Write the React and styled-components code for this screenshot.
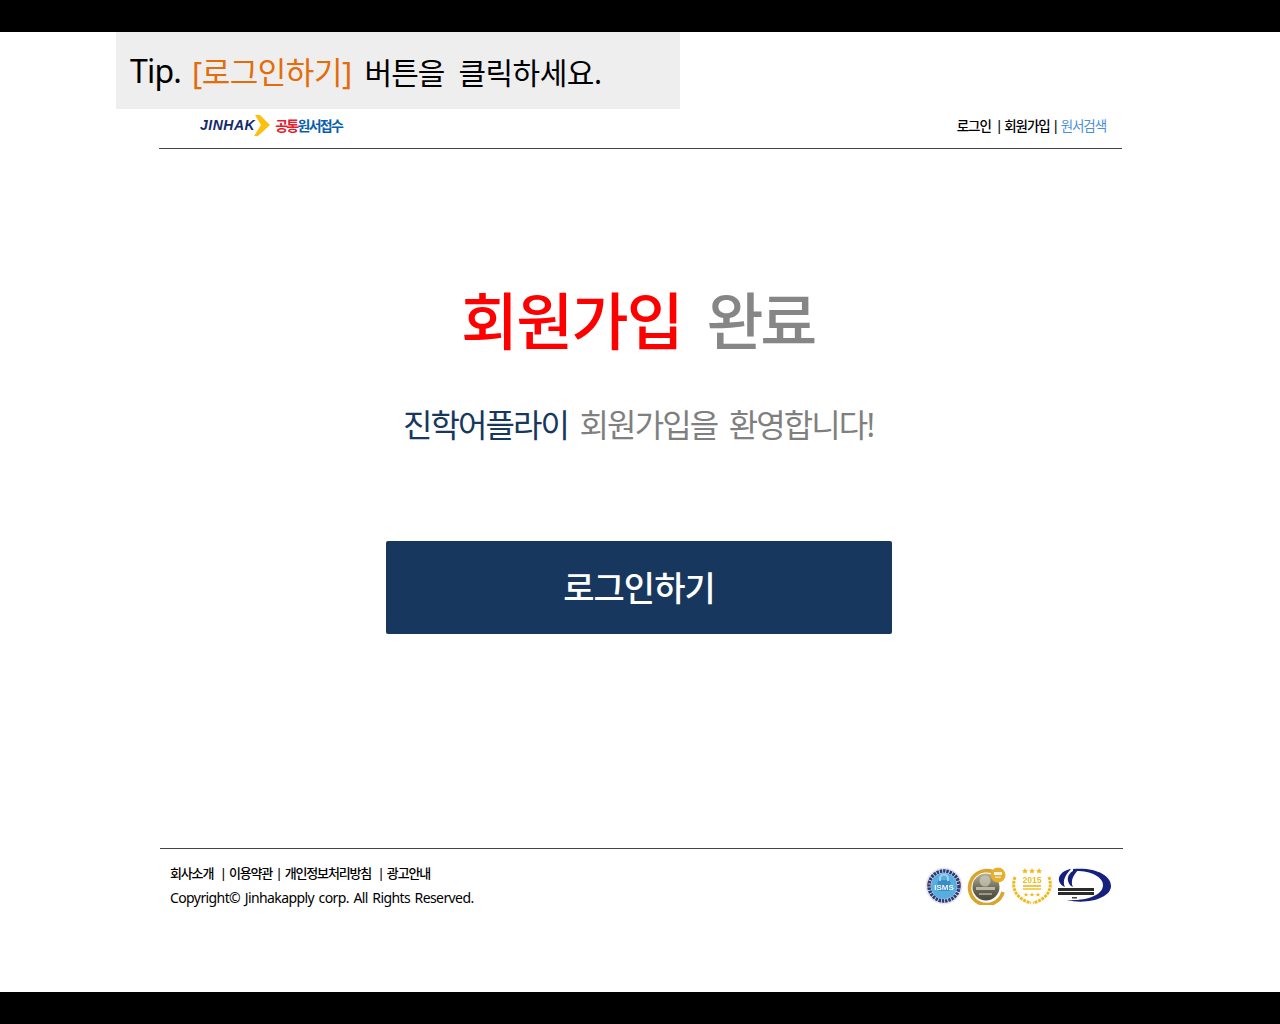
import React from "react";
import styled, { createGlobalStyle } from "styled-components";

const Global = createGlobalStyle`
  html, body { margin: 0; padding: 0; background: #fff; }
  body { font-family: "Noto Sans", "Noto Sans CJK KR", sans-serif; color: #000; }
`;
const Page = styled.div`
  width: 1280px;
  height: 1024px;
  display: flex;
  flex-direction: column;
  overflow: hidden;
`;
const BlackBar = styled.div`
  height: 32px;
  flex: none;
  background: #000;
`;
const Sheet = styled.main`
  flex: 1;
  display: flex;
  flex-direction: column;
`;
const Tip = styled.div`
  width: 564px;
  height: 77px;
  margin-left: 116px;
  padding-left: 14px;
  box-sizing: border-box;
  background: #eee;
  display: flex;
  align-items: center;
  font-size: 30px;
  letter-spacing: -1px;
  white-space: pre;
`;
const TipLead = styled.span`
  font-size: 32px;
  letter-spacing: -0.8px;
  margin-right: 11px;
`;
const Orange = styled.span`
  color: #e46c0a;
  font-size: 31px;
  letter-spacing: -0.5px;
  margin-right: 13px;
`;
const TipWord = styled.span`
  margin-right: 14px;
`;
const TipTail = styled.span`
  letter-spacing: -0.5px;
`;
const Header = styled.header`
  width: 963px;
  height: 40px;
  margin-left: 159px;
  box-sizing: border-box;
  border-bottom: 1px solid #444;
  padding: 0 16px 8px 41px;
  display: flex;
  align-items: center;
  justify-content: space-between;
`;
const Logo = styled.div`
  display: flex;
  align-items: center;
`;
const LogoWord = styled.span`
  font-family: "Liberation Sans", sans-serif;
  font-size: 14px;
  font-weight: 700;
  font-style: italic;
  letter-spacing: 0.5px;
  color: #14296b;
`;
const ChevronIcon = styled.svg`
  margin: 2px 0 0 -1px;
`;
const LogoRed = styled.span`
  margin-left: 5px;
  font-size: 14px;
  font-weight: 700;
  letter-spacing: -1.7px;
  color: #e5202e;
`;
const LogoBlue = styled.span`
  font-size: 14px;
  font-weight: 700;
  letter-spacing: -1.7px;
  color: #0b5fae;
`;
const Links = styled.nav`
  display: flex;
  font-size: 13.5px;
  font-weight: 500;
  letter-spacing: -1.1px;
  white-space: pre;
`;
const LinkBlue = styled.span`
  color: #4a8edb;
  font-weight: 400;
`;
const Content = styled.section`
  height: 699px;
  display: flex;
  flex-direction: column;
  align-items: center;
  box-sizing: border-box;
  padding-top: 127px;
`;
const Title = styled.h1`
  margin: 0 5px 0 0;
  font-size: 62px;
  line-height: 90px;
  font-weight: 500;
  letter-spacing: -1.8px;
  word-spacing: 10px;
  color: #868686;
  white-space: pre;
`;
const Red = styled.span`
  color: #ff0000;
`;
const Gray = styled.span`
  letter-spacing: -3.3px;
`;
const Sub = styled.p`
  margin: 36px 4px 0 0;
  font-size: 32px;
  line-height: 46px;
  letter-spacing: -1.9px;
  word-spacing: 5px;
  color: #7f7f7f;
  white-space: pre;
`;
const Navy = styled.span`
  color: #17375e;
`;
const LoginButton = styled.button`
  margin: 93px 2px 0 0;
  padding: 0 0 2px;
  width: 506px;
  height: 93px;
  border: 0;
  border-radius: 2px;
  background: #17375e;
  color: #fff;
  font-family: inherit;
  font-size: 34px;
  font-weight: 500;
  letter-spacing: -1px;
`;
const Footer = styled.footer`
  width: 963px;
  margin-left: 160px;
  border-top: 1px solid #444;
  box-sizing: border-box;
  height: 112px;
  padding: 14px 12px 0 10px;
  display: flex;
  justify-content: space-between;
  align-items: flex-start;
`;
const FooterText = styled.div`
  display: flex;
  flex-direction: column;
  gap: 5px;
`;
const FooterLinks = styled.div`
  font-size: 13px;
  font-weight: 500;
  line-height: 20px;
  letter-spacing: -1.15px;
  word-spacing: 1px;
  white-space: pre;
`;
const Copyright = styled.div`
  font-size: 14px;
  line-height: 20px;
  letter-spacing: -0.6px;
  word-spacing: 1.5px;
  white-space: pre;
`;
const Badges = styled.div`
  display: flex;
  align-items: center;
  gap: 4px;
  margin-top: 4px;
  filter: blur(0.4px);
`;

const Chevron = () => (
  <ChevronIcon width="16" height="21" viewBox="0 0 16 21">
    <path d="M1 0 L6 0 L16 10 L4 21 L0 21 L7 10 Z" fill="#fdc010" />
  </ChevronIcon>
);
const Isms = () => (
  <svg width="38" height="38" viewBox="0 0 38 38">
    <circle cx="19" cy="19" r="18.5" fill="#e4e7ec" />
    <circle cx="19" cy="19" r="15" fill="none" stroke="#2a3a7a" strokeWidth="3.5" strokeDasharray="2.5 0.8" />
    <circle cx="19" cy="19" r="13" fill="#58aede" />
    <rect x="12.5" y="13" width="13" height="11" rx="3" fill="#3a8cc6" />
    <path d="M15 14 V11.5 A4 4 0 0 1 23 11.5 V14" fill="none" stroke="#9cd2ec" strokeWidth="2" />
    <text x="19" y="22.5" textAnchor="middle" fontFamily="Liberation Sans, sans-serif" fontSize="8" fontWeight="700" fill="#eef6fb">ISMS</text>
    <circle cx="3" cy="17" r="1" fill="#d33" />
    <circle cx="35" cy="17" r="1" fill="#d33" />
  </svg>
);
const Medal = () => (
  <svg width="40" height="38" viewBox="0 0 40 38">
    <defs>
      <linearGradient id="medalFace" x1="0" y1="0" x2="0" y2="1">
        <stop offset="0" stopColor="#b5b19d" />
        <stop offset="0.55" stopColor="#6a6859" />
        <stop offset="1" stopColor="#4a483d" />
      </linearGradient>
    </defs>
    <circle cx="19" cy="20" r="13.5" fill="url(#medalFace)" />
    <path d="M31 8 A17 17 0 1 0 36 25" fill="none" stroke="#d9a52c" strokeWidth="3.6" />
    <circle cx="18" cy="14" r="5.5" fill="#d0cdb9" opacity="0.7" />
    <rect x="9" y="20" width="19" height="3" fill="#d5d2bc" opacity="0.75" />
    <rect x="12" y="26" width="13" height="2" fill="#c8c5ae" opacity="0.6" />
    <circle cx="31" cy="8" r="7.5" fill="#e6b02e" />
    <rect x="27" y="5" width="8" height="3" fill="#fff" opacity="0.9" />
    <rect x="28" y="9.5" width="6" height="1.5" fill="#fff" opacity="0.6" />
  </svg>
);
const Wreath = () => (
  <svg width="42" height="38" viewBox="0 0 42 38">
    <g fill="#eebc22">
      <path d="M14 1 l1 2 2 .2 -1.5 1.4 .4 2 -1.9 -1 -1.9 1 .4 -2 L11 3.2 l2 -.2z" />
      <path d="M21 1 l1 2 2 .2 -1.5 1.4 .4 2 -1.9 -1 -1.9 1 .4 -2 L18 3.2 l2 -.2z" />
      <path d="M28 1 l1 2 2 .2 -1.5 1.4 .4 2 -1.9 -1 -1.9 1 .4 -2 L25 3.2 l2 -.2z" />
      <text x="21" y="15.5" textAnchor="middle" fontFamily="Liberation Sans, sans-serif" fontSize="8.5" fontWeight="700">2015</text>
      <rect x="12" y="18" width="18" height="2" opacity="0.85" />
      <rect x="12" y="21" width="18" height="2" opacity="0.7" />
      <path d="M15 25.5 l.7 1.4 1.5 .1 -1.1 1 .3 1.5 -1.4 -.8 -1.4 .8 .3 -1.5 -1.1 -1 1.5 -.1z" />
      <path d="M21 25.5 l.7 1.4 1.5 .1 -1.1 1 .3 1.5 -1.4 -.8 -1.4 .8 .3 -1.5 -1.1 -1 1.5 -.1z" />
      <path d="M27 25.5 l.7 1.4 1.5 .1 -1.1 1 .3 1.5 -1.4 -.8 -1.4 .8 .3 -1.5 -1.1 -1 1.5 -.1z" />
    </g>
    <path d="M4 10 C0 21 5 32 20 36" fill="none" stroke="#eebc22" strokeWidth="3" strokeDasharray="3 0.8" />
    <path d="M38 10 C42 21 37 32 22 36" fill="none" stroke="#eebc22" strokeWidth="3" strokeDasharray="3 0.8" />
  </svg>
);
const Kcue = () => (
  <svg width="54" height="36" viewBox="0 0 54 36">
    <path d="M16 1 C38 -1 54 7 54 18 C54 30 30 37 10 32 C28 33 46 28 46 17 C46 8 32 2 16 3 Z" fill="#16207e" />
    <path d="M13 1 C5 3 1 8 2 13 C3 16 5 18 8 19 C6 15 6 9 14 1 Z" fill="#16207e" />
    <path d="M21 1 C13 3 10 8 11 13 C12 16 13 18 16 19 C14 15 14 9 22 1 Z" fill="#16207e" />
    <rect x="1" y="20" width="36" height="3" fill="#2a2a2a" />
    <rect x="1" y="24" width="36" height="3" fill="#2a2a2a" />
    <rect x="15" y="29" width="5" height="1.5" fill="#444" />
  </svg>
);

export default function App() {
  return (
    <Page>
      <Global />
      <BlackBar />
      <Sheet>
        <Tip>
          <TipLead>Tip.</TipLead>
          <Orange>[로그인하기]</Orange>
          <TipWord>버튼을</TipWord>
          <TipTail>클릭하세요.</TipTail>
        </Tip>
        <Header>
          <Logo>
            <LogoWord>JINHAK</LogoWord>
            <Chevron />
            <LogoRed>공통</LogoRed>
            <LogoBlue>원서접수</LogoBlue>
          </Logo>
          <Links>
            로그인  | 회원가입 | <LinkBlue>원서검색</LinkBlue>
          </Links>
        </Header>
        <Content>
          <Title>
            <Red>회원가입</Red> <Gray>완료</Gray>
          </Title>
          <Sub>
            <Navy>진학어플라이</Navy> 회원가입을 환영합니다!
          </Sub>
          <LoginButton>로그인하기</LoginButton>
        </Content>
        <Footer>
          <FooterText>
            <FooterLinks>회사소개  | 이용약관 | 개인정보처리방침  | 광고안내</FooterLinks>
            <Copyright>Copyright© Jinhakapply corp. All Rights Reserved.</Copyright>
          </FooterText>
          <Badges>
            <Isms />
            <Medal />
            <Wreath />
            <Kcue />
          </Badges>
        </Footer>
      </Sheet>
      <BlackBar />
    </Page>
  );
}
